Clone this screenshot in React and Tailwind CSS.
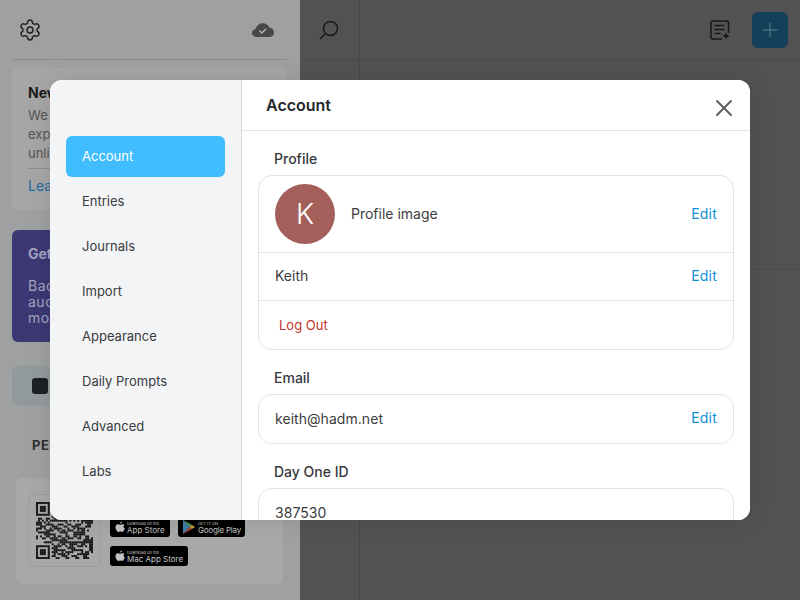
import { Settings, X, Plus } from 'lucide-react';

const navItems = ['Account', 'Entries', 'Journals', 'Import', 'Appearance', 'Daily Prompts', 'Advanced', 'Labs'];

const QR_SIZE = 29;

// finder squares in three corners, the rest is a fixed pseudo random fill
function qrCell(x, y) {
  const inFinder = (fx, fy) => x >= fx && x < fx + 7 && y >= fy && y < fy + 7;
  const finders = [[0, 0], [QR_SIZE - 7, 0], [0, QR_SIZE - 7]];
  for (const [fx, fy] of finders) {
    if (inFinder(fx, fy)) {
      const dx = x - fx;
      const dy = y - fy;
      const ring = dx === 0 || dx === 6 || dy === 0 || dy === 6;
      const core = dx >= 2 && dx <= 4 && dy >= 2 && dy <= 4;
      return ring || core;
    }
  }
  if ((x <= 7 && y <= 7) || (x >= QR_SIZE - 8 && y <= 7) || (x <= 7 && y >= QR_SIZE - 8)) return false;
  return ((x * 7 + y * 13 + x * y * 5 + ((x ^ y) * 3)) % 11) % 2 === 0;
}

function QrCode() {
  const cells = [];
  for (let y = 0; y < QR_SIZE; y++) {
    for (let x = 0; x < QR_SIZE; x++) {
      if (qrCell(x, y)) cells.push(<rect key={`${x}-${y}`} x={x} y={y} width="1" height="1" fill="#141414" />);
    }
  }
  return (
    <svg width="57" height="57" viewBox={`0 0 ${QR_SIZE} ${QR_SIZE}`}>
      {cells}
    </svg>
  );
}

function AppleGlyph() {
  return (
    <svg width="10" height="12" viewBox="0 0 20 24" fill="#c4c4c4" className="shrink-0">
      <path d="M14 1c.2 2-1.600 4.200-3.800 4.100C9.900 3 11.900 1.100 14 1zM19 8.200c-2.800 1.700-2.400 5.700.6 7-.8 2.200-2.800 6.800-5 6.800-1.300 0-2-.9-3.800-.9s-2.500.9-3.800.9C4.300 22 1 16.400 1 12.500 1 8.700 3.300 6.300 6.100 6.300c1.800 0 3 1.100 4.200 1.100 1.100 0 2.600-1.300 4.700-1.100 1.300.1 3 .7 4 1.900z" />
    </svg>
  );
}

function PlayGlyph() {
  return (
    <svg width="12" height="14" viewBox="0 0 12 14" className="shrink-0">
      <path d="M0 0l6.500 7L0 14z" fill="#3f7fb0" />
      <path d="M0 0l9 5-2.500 2z" fill="#4f9a63" />
      <path d="M0 14l9-5-2.500-2z" fill="#b0483f" />
      <path d="M9 5l3 2-3 2-2.500-2z" fill="#c9a13a" />
    </svg>
  );
}

function StoreBadge({ small, big, width, icon, gap, tight }) {
  return (
    <div className={`flex h-[20px] items-center rounded-[3px] bg-black pl-[5px] ${width} ${gap}`}>
      {icon}
      <div className="flex min-w-0 flex-col text-[#c4c4c4]">
        <span className="whitespace-nowrap text-[4px] leading-[5px]">{small}</span>
        <span className={`whitespace-nowrap text-[8px] leading-[8px] ${tight ? 'tracking-[-0.2px]' : ''}`}>{big}</span>
      </div>
    </div>
  );
}

function BackgroundSidebar() {
  return (
    <aside className="flex h-full w-[300px] shrink-0 flex-col bg-[#9fa0a2] pl-[12px] pr-[13px]">
      <div className="flex h-[60px] shrink-0 items-center justify-between border-b border-[#8b8c8d] pl-[6px] pr-[13px]">
        <Settings size={24} strokeWidth={1.4} className="text-[#1d1f21]" />
        <svg width="22" height="14" viewBox="0 0 22 14">
          <path d="M5 14C2 14 0 12.300 0 10c0-2.100 1.500-3.600 3.600-3.900C4.400 2.700 7.200.2 10.800.2c3 0 5.500 1.800 6.400 4.400 2.800.3 4.800 2.400 4.800 5 0 2.500-1.800 4.400-4.500 4.400z" fill="#47484a" />
          <path d="M7.500 7.700l2.400 2.300 4.200-4.200" fill="none" stroke="#b4b5b6" strokeWidth="1.400" />
        </svg>
      </div>

      <div className="mt-[8px] h-[142px] shrink-0 overflow-hidden rounded-[6px] bg-[#a6a6a6] px-[16px] pt-[15px]">
        <p className="text-[14px] font-bold leading-[20px] text-[#1b1b1b]">New</p>
        <p className="mt-[3px] text-[13px] leading-[19px] text-[#555]">We<br />exp<br />unli</p>
        <div className="mt-[5px] border-t border-[#8f8f8f] pt-[7px] text-[14px] leading-[20px] text-[#1f6a9c]">Lea</div>
      </div>

      <div className="mt-[20px] h-[112px] shrink-0 overflow-hidden rounded-[6px] bg-[#3b3873] px-[16px] pt-[14px]">
        <p className="text-[14px] font-bold leading-[20px] text-[#a3a3bd]">Get</p>
        <p className="mt-[14px] text-[14px] leading-[16px] tracking-[0.5px] text-[#a3a3bd]">Bac<br />auc<br />mo</p>
      </div>

      <div className="mt-[24px] flex h-[40px] shrink-0 items-center rounded-[6px] bg-[#92999b] pl-[20px]">
        <div className="h-[16px] w-[16px] rounded-[3px] bg-[#1c2023]" />
      </div>

      <p className="mt-[32px] pl-[20px] text-[13px] font-bold leading-[14px] tracking-[0.5px] text-[#2e2f31]">PERSONAL</p>

      <div className="ml-[4px] mt-[26px] flex h-[106px] w-[267px] shrink-0 gap-[9px] rounded-[6px] bg-[#a8a8a8] px-[12px] pt-[16px]">
        <div className="flex h-[73px] w-[73px] shrink-0 items-center justify-center rounded-[6px] border border-[#9d9d9d]">
          <QrCode />
        </div>
        <div className="flex flex-col gap-[9px] pt-[23px]">
          <div className="flex gap-[8px]">
            <StoreBadge small="Download on the" big="App Store" width="w-[60px]" gap="gap-[2px]" icon={<AppleGlyph />} />
            <StoreBadge small="GET IT ON" big="Google Play" width="w-[67px]" gap="gap-[3px]" tight icon={<PlayGlyph />} />
          </div>
          <StoreBadge small="Download on the" big="Mac App Store" width="w-[78px]" gap="gap-[2px]" icon={<AppleGlyph />} />
        </div>
      </div>
    </aside>
  );
}

function BackgroundMain() {
  return (
    <div className="flex h-full flex-1 flex-col bg-[#525252]">
      <div className="flex h-[61px] shrink-0 border-b border-[#494949]">
        <div className="flex w-[60px] shrink-0 items-center border-r border-[#494949] pl-[19px]">
          <svg width="20" height="20" viewBox="0 0 20 20" fill="none" stroke="#181818" strokeWidth="1.500">
            <circle cx="11.500" cy="8.500" r="7" />
            <path d="M6.500 13.500L1 19" />
          </svg>
        </div>
        <div className="flex flex-1 items-center justify-end gap-[22px] pr-[12px]">
          <svg width="20" height="20" viewBox="0 0 20 20" fill="none" stroke="#181818" strokeWidth="1.500">
            <path d="M12 19H3a2 2 0 0 1-2-2V3a2 2 0 0 1 2-2h13.500a2 2 0 0 1 2 2v10" />
            <path d="M4.500 5.500h10M4.500 9.500h10M4.500 13.500h6" />
            <path d="M16 13.500v5M13.500 16h5" strokeWidth="1.800" />
          </svg>
          <div className="flex h-[36px] w-[36px] items-center justify-center rounded-[6px] bg-[#15405a]">
            <Plus size={24} strokeWidth={1} className="text-[#5f7f92]" />
          </div>
        </div>
      </div>
      <div className="flex flex-1">
        <div className="w-[60px] shrink-0 border-r border-[#494949]" />
        <div className="flex-1">
          <div className="h-[209px] border-b border-[#494949]" />
        </div>
      </div>
    </div>
  );
}

function SettingsNav() {
  return (
    <nav className="flex w-[192px] shrink-0 flex-col gap-[4px] border-r border-[#d9d9d9] bg-[#f3f4f6] px-[16px] pt-[56px]">
      {navItems.map((item, index) => (
        <div
          key={item}
          className={`flex h-[41px] shrink-0 items-center rounded-[6px] pl-[16px] text-[13px] ${
            index === 0 ? 'bg-[#40bdff] text-white' : 'text-[#3a3b3e]'
          }`}
        >
          {item}
        </div>
      ))}
    </nav>
  );
}

function SectionLabel({ children, className }) {
  return <p className={`pl-[16px] text-[14px] font-medium leading-[18px] text-[#37383b] ${className}`}>{children}</p>;
}

function EditLink({ className }) {
  return <span className={`text-[14px] tracking-[0.2px] text-[#0b8fd6] ${className}`}>Edit</span>;
}

function AccountPanel() {
  return (
    <section className="flex min-w-0 flex-1 flex-col bg-white">
      <header className="relative flex h-[51px] shrink-0 items-center border-b border-[#e2e2e2] pl-[24px]">
        <h2 className="text-[16px] font-semibold text-[#26282b]">Account</h2>
        <X size={28} strokeWidth={1.75} className="absolute right-[12px] top-[14px] text-[#5f6063]" />
      </header>

      <div className="min-h-0 flex-1 overflow-hidden px-[16px] pt-[19px]">
        <SectionLabel>Profile</SectionLabel>
        <div className="mt-[7px] rounded-[14px] border border-[#e2e2e2] text-[14px] text-[#3b3c3e]">
          <div className="flex h-[77px] items-center border-b border-[#e2e2e2] px-[16px]">
            <div className="flex h-[60px] w-[60px] shrink-0 items-center justify-center rounded-full bg-[#a45f5a] text-[28px] font-light text-white">K</div>
            <span className="mb-[2px] ml-[16px] flex-1">Profile image</span>
            <EditLink className="mb-[2px]" />
          </div>
          <div className="flex h-[48px] items-center justify-between border-b border-[#e2e2e2] px-[16px] pb-[2px]">
            <span>Keith</span>
            <EditLink />
          </div>
          <div className="flex h-[48px] items-center pl-[20px] pt-[2px] text-[13px] text-[#c0342b]">Log Out</div>
        </div>

        <SectionLabel className="mt-[19px]">Email</SectionLabel>
        <div className="mt-[7px] flex h-[50px] items-center justify-between rounded-[14px] border border-[#e2e2e2] px-[16px] pb-[2px] text-[14px] tracking-[0.05px] text-[#3b3c3e]">
          <span>keith@hadm.net</span>
          <EditLink className="mb-[2px]" />
        </div>

        <SectionLabel className="mt-[19px]">Day One ID</SectionLabel>
        <div className="mt-[7px] flex h-[50px] items-center rounded-[14px] border border-[#e2e2e2] pb-[2px] pl-[16px] text-[14px] tracking-[0.05px] text-[#3b3c3e]">
          <span>387530</span>
        </div>
      </div>
    </section>
  );
}

export default function App() {
  return (
    <div className="relative flex h-[600px] w-[800px] overflow-hidden font-['Inter',sans-serif]">
      <BackgroundSidebar />
      <BackgroundMain />

      <div className="absolute left-[50px] top-[80px] flex h-[440px] w-[700px] overflow-hidden rounded-[12px] bg-white shadow-[0_0_24px_rgba(0,0,0,0.1)]">
        <SettingsNav />
        <AccountPanel />
      </div>
    </div>
  );
}
